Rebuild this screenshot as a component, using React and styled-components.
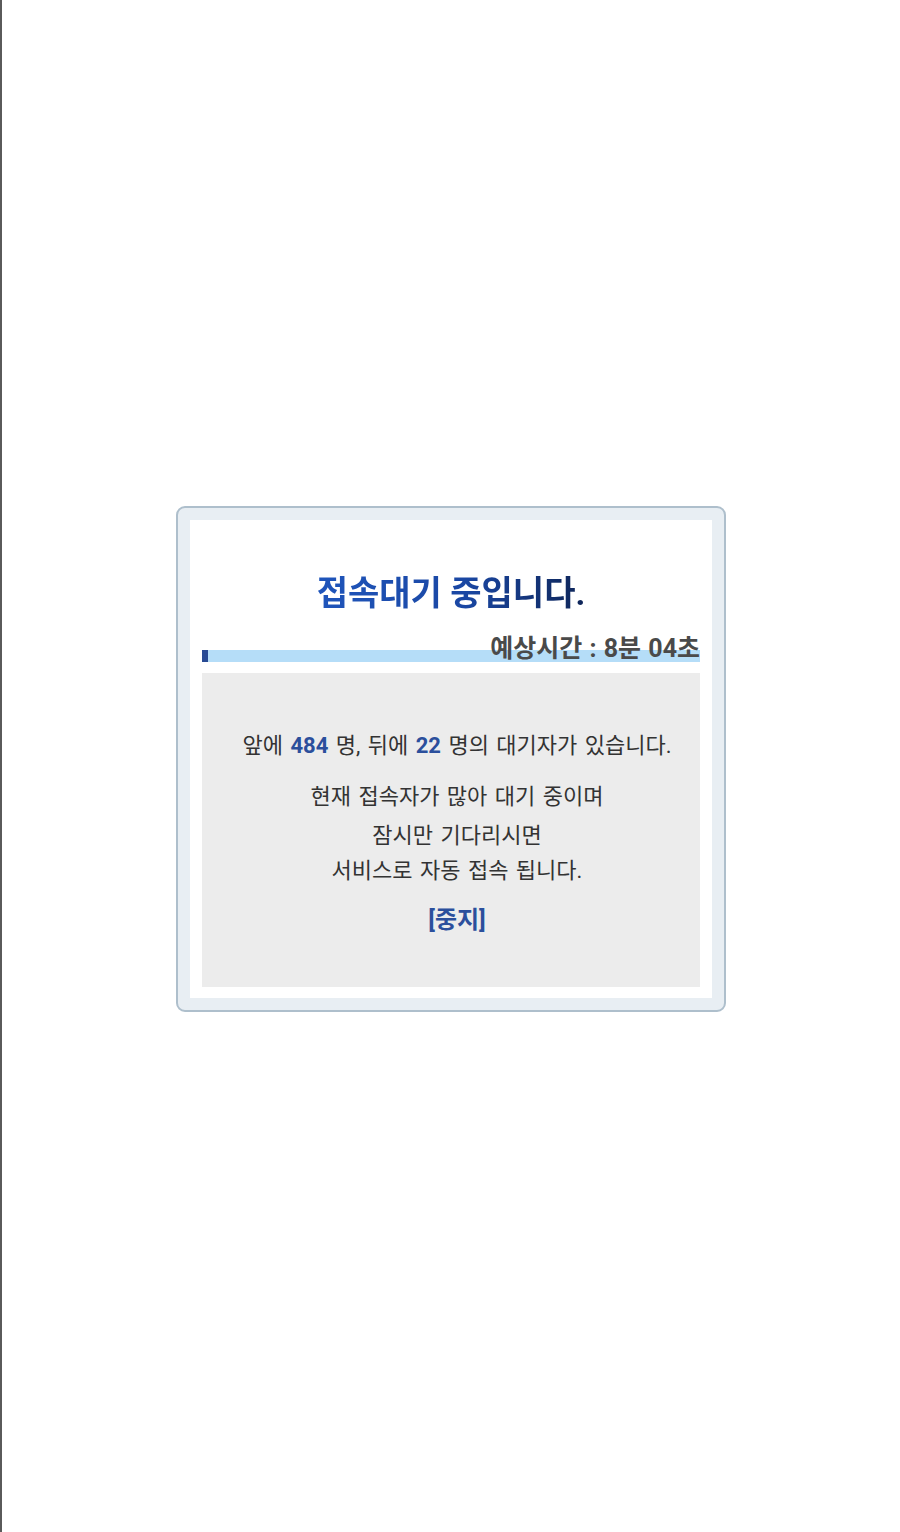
import React from "react";
import styled, { createGlobalStyle } from "styled-components";

const Global = createGlobalStyle`
  html, body { margin: 0; padding: 0; background: #ffffff; }
  *, *::before, *::after { box-sizing: border-box; }
  body {
    font-family: Roboto, "Noto Sans CJK KR", "Noto Sans", sans-serif;
    border-left: 2px solid #5a5a5a;
    min-height: 1532px;
  }
`;

const Page = styled.div`
  display: flex;
  justify-content: center;
  padding-top: 506px;
`;

const Frame = styled.div`
  width: 550px;
  padding: 12px;
  background: #e8eef3;
  border: 2px solid #aebfcc;
  border-radius: 9px;
`;

const Inner = styled.div`
  background: #ffffff;
  padding: 53px 12px 11px;
  display: flex;
  flex-direction: column;
`;

const Title = styled.h1`
  margin: 0;
  font-size: 34px;
  line-height: 40px;
  font-weight: 700;
  text-align: center;
  span {
    background: linear-gradient(90deg, #1f55bb 0%, #1a47a3 55%, #0e2558 100%);
    -webkit-background-clip: text;
    background-clip: text;
    color: transparent;
  }
`;

const TimeRow = styled.div`
  margin-top: 23px;
  display: flex;
  flex-direction: column;
`;

const TimeText = styled.div`
  position: relative;
  z-index: 1;
  text-align: right;
  font-size: 25px;
  line-height: 26px;
  font-weight: 700;
  color: #4a4a4a;
  word-spacing: 1px;
`;

const Bar = styled.div`
  margin-top: -12px;
  height: 12px;
  background: #b5ddf8;
  display: flex;
`;

const BarFill = styled.div`
  height: 100%;
  background: #284a94;
`;

const InfoBox = styled.div`
  margin-top: 11px;
  height: 314px;
  background: #ececec;
  padding: 58px 0 0 12px;
  display: flex;
  flex-direction: column;
  align-items: center;
  color: #333333;
`;

const Line = styled.p`
  margin: ${(p) => p.$mt || 0}px 0 0;
  font-size: 22px;
  line-height: ${(p) => p.$lh || 30}px;
  text-align: center;
  word-spacing: 2px;
`;

const Num = styled.b`
  color: #2b4f9c;
  font-weight: 700;
`;

const Stop = styled.a`
  margin-top: 15px;
  font-size: 24px;
  line-height: 34px;
  font-weight: 700;
  color: #2b4f9c;
  text-decoration: none;
  cursor: pointer;
`;

export default function App() {
  return (
    <>
      <Global />
      <Page>
        <Frame>
          <Inner>
            <Title>
              <span>접속대기 중입니다.</span>
            </Title>
            <TimeRow>
              <TimeText>예상시간 : 8분 04초</TimeText>
              <Bar>
                <BarFill style={{ width: "6px" }} />
              </Bar>
            </TimeRow>
            <InfoBox>
              <Line>
                앞에 <Num>484</Num> 명, 뒤에 <Num>22</Num> 명의 대기자가 있습니다.
              </Line>
              <Line $mt={18} $lh={35}>현재 접속자가 많아 대기 중이며</Line>
              <Line $mt={4} $lh={35}>잠시만 기다리시면</Line>
              <Line $lh={35}>서비스로 자동 접속 됩니다.</Line>
              <Stop>[중지]</Stop>
            </InfoBox>
          </Inner>
        </Frame>
      </Page>
    </>
  );
}
